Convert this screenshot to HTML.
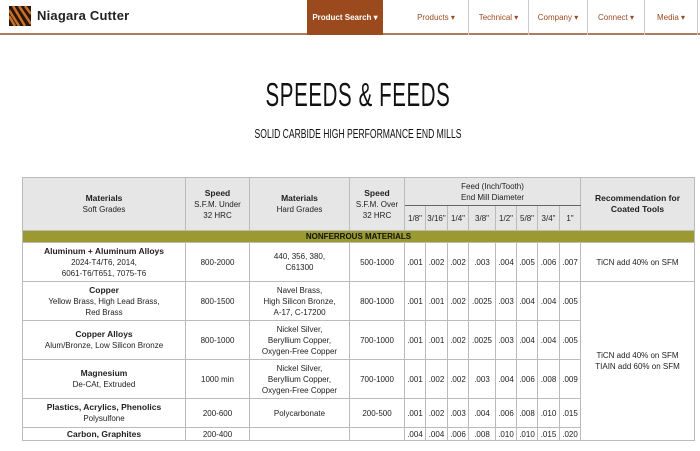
<!DOCTYPE html>
<html><head><meta charset="utf-8"><style>
*{margin:0;padding:0;box-sizing:border-box}
body{width:700px;height:451px;overflow:hidden;background:#fff;font-family:"Liberation Sans",sans-serif;position:relative}
.hdr{position:absolute;left:0;top:0;width:700px;height:35px;border-bottom:2px solid #b07a5c}
.logo{position:absolute;left:9px;top:6px;width:22px;height:20px}
.brand{position:absolute;left:37px;top:8px;font-size:13px;font-weight:bold;color:#222;letter-spacing:.2px}
.ps{position:absolute;left:307px;top:0;width:76px;height:35px;background:#9b4a1e;color:#fff;font-size:8px;font-weight:bold;line-height:36px;text-align:center}
.nav{position:absolute;top:0;height:35px;line-height:36px;font-size:8px;color:#9b4a1e;text-align:center}
.sep{position:absolute;top:0;width:1px;height:35px;background:#ccc}
.title{position:absolute;left:0;width:716px;top:76px;text-align:center;font-size:33px;color:#111;transform:scaleX(.62);transform-origin:358px 0;letter-spacing:1px}
.sub{position:absolute;left:0;width:716px;top:126px;text-align:center;font-size:13px;color:#111;transform:scaleX(.66);transform-origin:358px 0}
table{position:absolute;left:22px;top:177px;border-collapse:collapse;table-layout:fixed;width:672px;font-size:8px;color:#222;border:1px solid #777}
td{border:1px solid #bbb;text-align:center;vertical-align:middle;line-height:11px;padding:0;overflow:hidden;white-space:nowrap}
.h td{background:#e6e6e6}
b{font-weight:bold;font-size:8.5px}
.nf td{background:#9a9a30;height:12px;text-align:center;font-weight:bold;font-size:8px;color:#111}
</style></head><body>
<div class="hdr">
<svg class="logo" viewBox="0 0 22 20"><rect width="22" height="20" fill="#2a1608"/><path d="M0 4 L10 20 M0 10 L6 20 M4 0 L16 20 M10 0 L22 18 M16 0 L22 8" stroke="#c8702a" stroke-width="2.5" fill="none"/></svg>
<div class="brand">Niagara Cutter</div>
<div class="ps">Product Search &#9662;</div>
<div class="nav" style="left:405px;width:62px">Products &#9662;</div>
<div class="sep" style="left:468px"></div>
<div class="nav" style="left:469px;width:59px">Technical &#9662;</div>
<div class="sep" style="left:528px"></div>
<div class="nav" style="left:529px;width:58px">Company &#9662;</div>
<div class="sep" style="left:587px"></div>
<div class="nav" style="left:588px;width:56px">Connect &#9662;</div>
<div class="sep" style="left:644px"></div>
<div class="nav" style="left:645px;width:52px">Media &#9662;</div>
<div class="sep" style="left:697px"></div>
</div>
<div class="title">SPEEDS &amp; FEEDS</div>
<div class="sub">SOLID CARBIDE HIGH PERFORMANCE END MILLS</div>
<table>
<colgroup><col style="width:163px"><col style="width:64px"><col style="width:100px"><col style="width:55px"><col style="width:21px"><col style="width:22px"><col style="width:21px"><col style="width:27px"><col style="width:21px"><col style="width:21px"><col style="width:22px"><col style="width:21px"><col style="width:114px"></colgroup>
<tr class="h" style="height:28px"><td rowspan="2"><b>Materials</b><br>Soft Grades</td><td rowspan="2"><b>Speed</b><br>S.F.M. Under<br>32 HRC</td><td rowspan="2"><b>Materials</b><br>Hard Grades</td><td rowspan="2"><b>Speed</b><br>S.F.M. Over<br>32 HRC</td><td colspan="8" style="border-bottom:1px solid #666">Feed (Inch/Tooth)<br>End Mill Diameter</td><td rowspan="2"><b>Recommendation for<br>Coated Tools</b></td></tr>
<tr class="h" style="height:25px"><td style="border-left:1px solid #666">1/8"</td><td>3/16"</td><td>1/4"</td><td>3/8"</td><td>1/2"</td><td>5/8"</td><td>3/4"</td><td style="border-right:1px solid #666">1"</td></tr>
<tr class="nf"><td colspan="13">NONFERROUS MATERIALS</td></tr>
<tr style="height:39px"><td><b>Aluminum + Aluminum Alloys</b><br>2024-T4/T6, 2014,<br>6061-T6/T651, 7075-T6</td><td>800-2000</td><td>440, 356, 380,<br>C61300</td><td>500-1000</td><td>.001</td><td>.002</td><td>.002</td><td>.003</td><td>.004</td><td>.005</td><td>.006</td><td>.007</td><td>TiCN add 40% on SFM</td></tr>
<tr style="height:39px"><td><b>Copper</b><br>Yellow Brass, High Lead Brass,<br>Red Brass</td><td>800-1500</td><td>Navel Brass,<br>High Silicon Bronze,<br>A-17, C-17200</td><td>800-1000</td><td>.001</td><td>.001</td><td>.002</td><td>.0025</td><td>.003</td><td>.004</td><td>.004</td><td>.005</td><td rowspan="5">TiCN add 40% on SFM<br>TIAIN add 60% on SFM</td></tr>
<tr style="height:39px"><td><b>Copper Alloys</b><br>Alum/Bronze, Low Silicon Bronze</td><td>800-1000</td><td>Nickel Silver,<br>Beryllium Copper,<br>Oxygen-Free Copper</td><td>700-1000</td><td>.001</td><td>.001</td><td>.002</td><td>.0025</td><td>.003</td><td>.004</td><td>.004</td><td>.005</td></tr>
<tr style="height:39px"><td><b>Magnesium</b><br>De-CAt, Extruded</td><td>1000 min</td><td>Nickel Silver,<br>Beryllium Copper,<br>Oxygen-Free Copper</td><td>700-1000</td><td>.001</td><td>.002</td><td>.002</td><td>.003</td><td>.004</td><td>.006</td><td>.008</td><td>.009</td></tr>
<tr style="height:29px"><td><b>Plastics, Acrylics, Phenolics</b><br>Polysulfone</td><td>200-600</td><td>Polycarbonate</td><td>200-500</td><td>.001</td><td>.002</td><td>.003</td><td>.004</td><td>.006</td><td>.008</td><td>.010</td><td>.015</td></tr>
<tr style="height:13px"><td><b>Carbon, Graphites</b></td><td>200-400</td><td></td><td></td><td>.004</td><td>.004</td><td>.006</td><td>.008</td><td>.010</td><td>.010</td><td>.015</td><td>.020</td></tr>
</table>
</body></html>
